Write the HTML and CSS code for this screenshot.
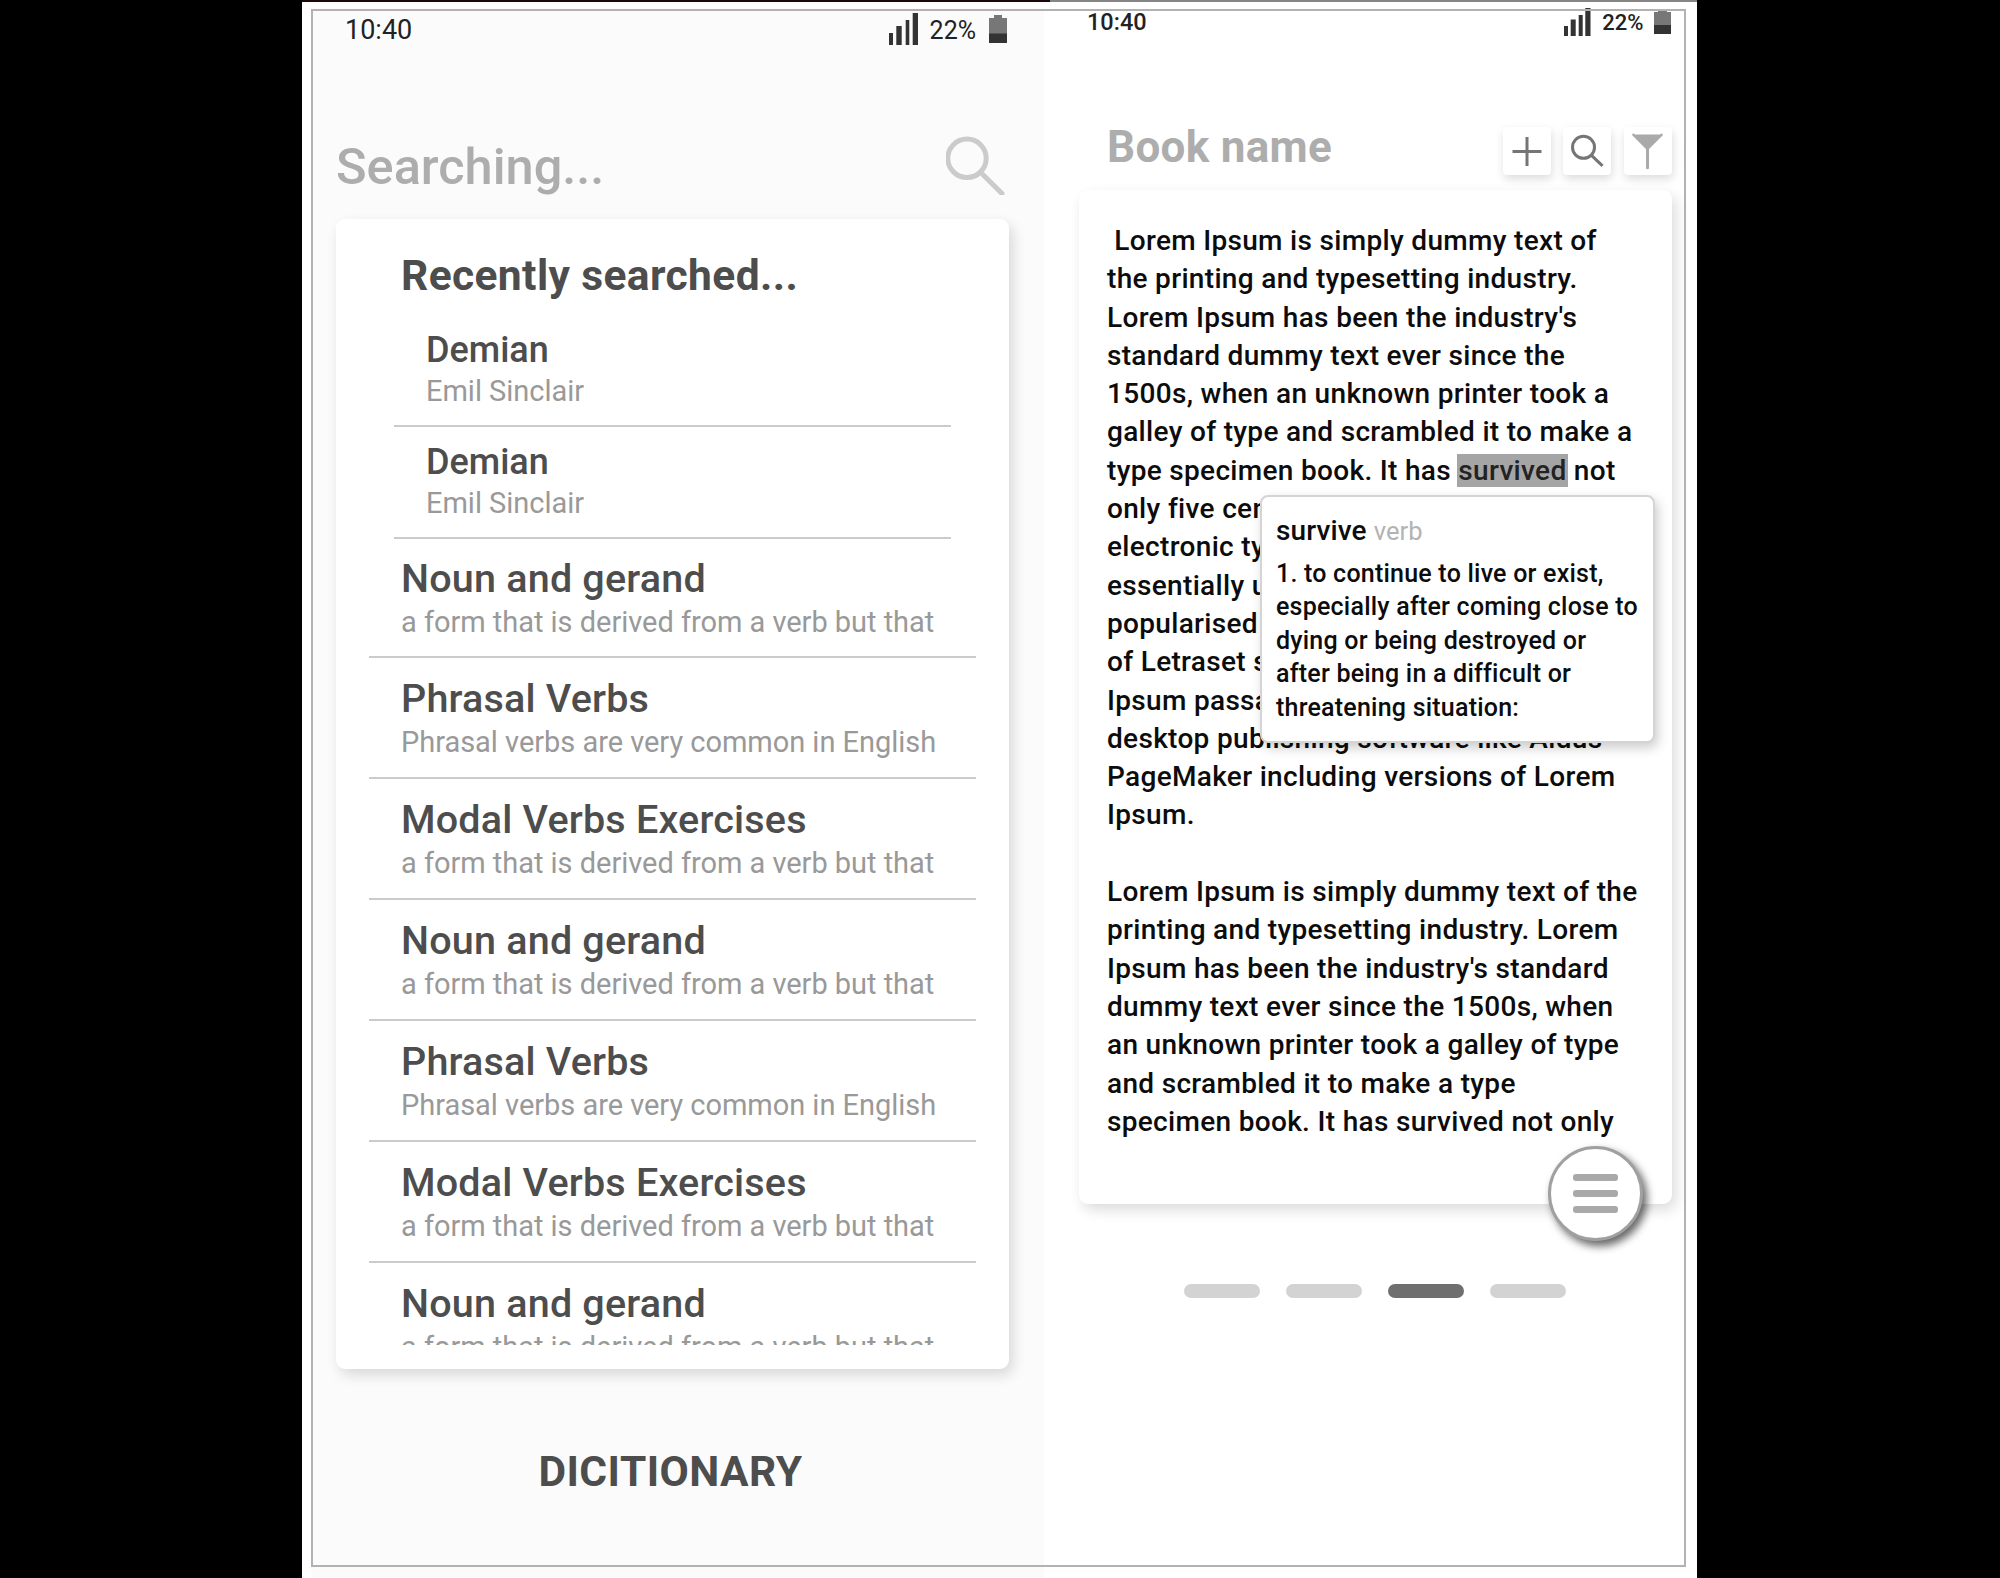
FILE: index.html
```html
<!DOCTYPE html>
<html lang="en">
<head>
<meta charset="utf-8">
<title>Dictionary and reader</title>
<link rel="stylesheet" href="styles.css">
</head>
<body>
<main class="stage">
  <section class="screen search-screen">
    <header class="status">
      <span>10:40</span>
      <div class="status-right">
        <svg class="signal" width="30" height="32" viewBox="0 0 30 32"><path d="M0 20h4v12H0zM7.300 13h5.400v19H7.300zM16.700 7h3.600v25h-3.600zM23.700 0h5.300v32h-5.300z"/></svg>
        <span>22%</span>
        <svg class="battery" width="18" height="28" viewBox="0 0 18 28"><path class="battery-shell" d="M5 0h8v3h5v16H0V3h5z"/><path class="battery-level" d="M0 18.500h18V28H0z"/></svg>
      </div>
    </header>
    <div class="search-bar">
      <span class="search-text">Searching...</span>
      <svg class="search-icon" width="60" height="60" viewBox="0 0 60 60"><circle cx="21" cy="23.300" r="19.200"/><path d="M35 37.800 56 58.500"/></svg>
    </div>
    <div class="card search-card">
      <div class="list">
        <h2>Recently searched...</h2>
        <ul class="recent">
          <li><b>Demian</b><small>Emil Sinclair</small></li>
          <li><b>Demian</b><small>Emil Sinclair</small></li>
        </ul>
        <ul class="topics">
          <li><b>Noun and gerand</b><small>a form that is derived from a verb but that</small></li>
          <li><b>Phrasal Verbs</b><small>Phrasal verbs are very common in English</small></li>
          <li><b>Modal Verbs Exercises</b><small>a form that is derived from a verb but that</small></li>
          <li><b>Noun and gerand</b><small>a form that is derived from a verb but that</small></li>
          <li><b>Phrasal Verbs</b><small>Phrasal verbs are very common in English</small></li>
          <li><b>Modal Verbs Exercises</b><small>a form that is derived from a verb but that</small></li>
          <li><b>Noun and gerand</b><small>a form that is derived from a verb but that</small></li>
        </ul>
      </div>
    </div>
    <h1>DICITIONARY</h1>
  </section>

  <section class="screen reader-screen">
    <header class="status">
      <span>10:40</span>
      <div class="status-right">
        <svg class="signal" width="27" height="28" viewBox="0 0 27 28"><path d="M0 18h4v10H0zM6.700 11.500h5v16.500h-5zM14.700 7h4v21h-4zM21.300 0h5.200v28h-5.200z"/></svg>
        <span>22%</span>
        <svg class="battery" width="17" height="24" viewBox="0 0 17 24"><path class="battery-shell" d="M4 0h9v2h4v15H0V2h4z"/><path class="battery-level" d="M0 15h17v9H0z"/></svg>
      </div>
    </header>
    <div class="book-bar">
      <span class="book-name">Book name</span>
      <div class="tools">
        <button aria-label="Add"><svg width="48" height="48" viewBox="0 0 48 48"><path class="line" d="M24 10v29M9.500 24.500h29"/></svg></button>
        <button aria-label="Search"><svg width="48" height="48" viewBox="0 0 48 48"><circle class="line" cx="20.500" cy="20.300" r="11"/><path class="line" d="M28.500 28.300 39.500 38.800"/></svg></button>
        <button aria-label="Filter"><svg width="48" height="48" viewBox="0 0 48 48"><path class="funnel" d="M8 8q1-2.500 3-.5h25q2-2 3 .5L25 22V41.500q-1.500 1.500-3 0V22z"/></svg></button>
      </div>
    </div>
    <article class="card reader-card">
      <p>&nbsp;Lorem Ipsum is simply dummy text of<br>the printing and typesetting industry.<br>Lorem Ipsum has been the industry's<br>standard dummy text ever since the<br>1500s, when an unknown printer took a<br>galley of type and scrambled it to make a<br>type specimen book. It has <mark>survived</mark> not<br>only five centuries, but also the leap into<br>electronic typesetting, remaining<br>essentially unchanged. It was<br>popularised in the 1960s with the release<br>of Letraset sheets containing Lorem<br>Ipsum passages, and more recently with<br>desktop publishing software like Aldus<br>PageMaker including versions of Lorem<br>Ipsum.</p>
      <p>Lorem Ipsum is simply dummy text of the<br>printing and typesetting industry. Lorem<br>Ipsum has been the industry's standard<br>dummy text ever since the 1500s, when<br>an unknown printer took a galley of type<br>and scrambled it to make a type<br>specimen book. It has survived not only</p>
      <aside class="popup">
        <h3>survive <span class="kind">verb</span></h3>
        <div>1. to continue to live or exist,<br>especially after coming close to<br>dying or being destroyed or<br>after being in a difficult or<br>threatening situation:</div>
      </aside>
      <button class="menu" aria-label="Menu"><i></i><i></i><i></i></button>
    </article>
    <nav class="pager"><i></i><i></i><i class="current"></i><i></i></nav>
  </section>
  <div class="frame"></div>
</main>
</body>
</html>
```
FILE: styles.css
```css
* { box-sizing: border-box; }

body {
  margin: 0;
  background: #000;
  font-family: Roboto, "Liberation Sans", sans-serif;
  white-space: nowrap;
}

ul, h1, h2, h3, p { margin: 0; padding: 0; list-style: none; }
button { border: 0; padding: 0; background: #fff; }
svg { display: block; flex: none; }

.stage {
  position: relative;
  display: flex;
  width: 1395px;
  height: 1578px;
  margin-left: 302px;
  background: #fff;
}
.stage::before {
  content: "";
  position: absolute;
  inset: 0 0 auto;
  height: 2px;
  background: linear-gradient(90deg, #1c0808 748px, #858585 748px);
}
.frame {
  position: absolute;
  inset: 9px 11px 11px 9px;
  border: 2px solid #b2b2b2;
  pointer-events: none;
}

.screen { display: flex; flex-direction: column; }
.search-screen {
  width: 742px;
  padding: 10px 35px 0 34px;
  background: linear-gradient(#fff 10px, transparent 10px), linear-gradient(90deg, #fff 9px, #fbfbfb 9px);
}
.reader-screen { width: 653px; padding: 3px 25.500px 0 35px; }

.status { display: flex; justify-content: space-between; color: #222; }
.status-right { display: flex; }
.signal { fill: #333; }
.battery-shell { fill: #777; }
.battery-level { fill: #333; }

.search-screen .status { height: 40px; padding: 0 2px 0 9px; font-size: 27px; line-height: 41px; }
.search-screen .status-right { font-size: 25px; }
.search-screen .signal { margin: 3px 11px 0 0; }
.search-screen .battery { margin: 5px 0 0 13px; }

.reader-screen .status { height: 40px; padding: 0 1px 0 8px; font-size: 23.500px; font-weight: 500; line-height: 39px; }
.reader-screen .status-right { font-size: 22px; }
.reader-screen .signal { margin: 5px 11px 0 0; }
.reader-screen .battery { margin: 7px 0 0 10px; }

.search-bar {
  display: flex;
  justify-content: space-between;
  height: 169px;
  padding: 85px 3px 0 0;
}
.search-text { font-size: 50.500px; font-weight: 500; line-height: 64px; color: #adadad; }
.search-icon { fill: none; stroke: #cbcbcb; stroke-width: 5; stroke-linecap: round; }

.card {
  border-radius: 9px;
  background: #fff;
  box-shadow: 4px 6px 14px rgba(0, 0, 0, .14);
}
.search-card { height: 1150px; padding-top: 31px; }
.list { height: 1095px; overflow: hidden; color: #4d4d4d; }
.list h2 { padding-left: 65px; font-size: 42.500px; line-height: 52px; letter-spacing: .4px; }
.list li { border-bottom: 2px solid #cbcbcb; }
.list b, .list small { display: block; }
.list b { font-weight: 500; }
.list small { font-size: 29px; letter-spacing: -.03px; color: #999; }
.recent { padding: 13px 58px 0; }
.recent li { height: 112px; padding: 13px 0 0 32px; }
.recent b { font-size: 36px; line-height: 44px; }
.recent small { line-height: 38px; }
.topics { padding: 0 33px; }
.topics li { height: 121.100px; padding: 17px 0 0 32px; }
.topics li:first-child { height: 119px; padding-top: 16px; }
.topics b { font-size: 39.500px; line-height: 48px; letter-spacing: .2px; }
.topics small { line-height: 38px; }
.search-screen h1 { margin: 77px 4px 0 0; font-size: 42.500px; line-height: 52px; letter-spacing: .45px; text-align: center; color: #4d4d4d; }

.book-bar {
  display: flex;
  justify-content: space-between;
  height: 147px;
  padding: 84px 0 0 28px;
}
.book-name { font-size: 44px; font-weight: 700; line-height: 40px; letter-spacing: .3px; color: #adadad; }
.tools { display: flex; gap: 12.500px; }
.tools button {
  width: 48px;
  height: 48px;
  border-radius: 4px;
  box-shadow: 1px 4px 10px rgba(0, 0, 0, .14);
}
.line { fill: none; stroke: #757575; stroke-width: 3; }
.funnel { fill: #aaa; }

.reader-card {
  position: relative;
  height: 1014px;
  padding: 32px 0 0 28px;
  font-size: 28px;
  font-weight: 500;
  line-height: 38.300px;
  letter-spacing: .32px;
  color: #0c0c0c;
}
.reader-card p + p { margin-top: 38.300px; }
mark { padding: 0; background: #a5a5a5; color: #222; box-shadow: -1px 0 #a5a5a5, 1px 0 #a5a5a5; }
.popup {
  position: absolute;
  left: 181px;
  top: 305px;
  width: 395px;
  height: 248px;
  padding: 14px;
  border: 2px solid #d4d4d4;
  border-radius: 8px;
  background: #fff;
  box-shadow: 3px 5px 12px rgba(0, 0, 0, .2);
}
.popup h3 { font-size: 28px; font-weight: 500; line-height: 40px; letter-spacing: .1px; }
.kind { font-size: 25.500px; font-weight: 400; color: #b3b3b3; }
.popup div { margin-top: 6px; font-size: 25px; line-height: 33.400px; letter-spacing: .22px; }
.menu {
  position: absolute;
  left: 468.500px;
  top: 956px;
  display: flex;
  flex-direction: column;
  align-items: center;
  justify-content: center;
  gap: 9.500px;
  width: 95px;
  height: 95px;
  border: 3px solid #a0a0a0;
  border-radius: 50%;
  box-shadow: 4px 5px 9px rgba(0, 0, 0, .6);
}
.menu i { width: 45px; height: 6.500px; border-radius: 3px; background: #a9a9a9; }

.pager { display: flex; gap: 25.500px; padding: 79.500px 0 0 104.500px; }
.pager i { width: 76.500px; height: 14px; border-radius: 7px; background: #d3d3d3; }
.pager .current { background: #6f6f6f; }
```
